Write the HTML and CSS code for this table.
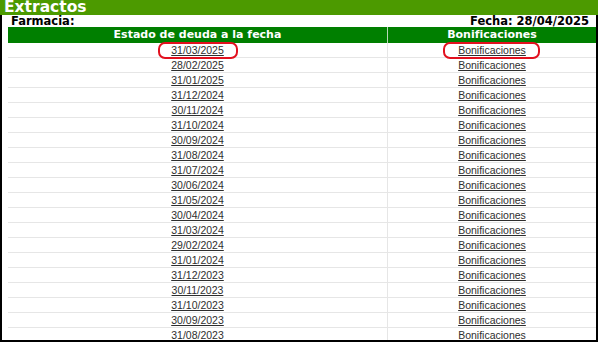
FILE: index.html
```html
<!DOCTYPE html>
<html lang="es">
<head>
<meta charset="utf-8">
<title>Extractos</title>
<link rel="stylesheet" href="styles.css">
</head>
<body>
<div class="page">
  <div class="titlebar">Extractos</div>
  <div class="panel">
    <div class="info">
      <span>Farmacia:</span>
      <span>Fecha: 28/04/2025</span>
    </div>
    <table class="grid">
      <colgroup><col class="c1"><col class="c2"></colgroup>
      <thead>
        <tr><th>Estado de deuda a la fecha</th><th class="sep">Bonificaciones</th></tr>
      </thead>
      <tbody>
        <tr><td><a href="#" class="mark">31/03/2025</a></td><td class="sep"><a href="#" class="mark mark-wide">Bonificaciones</a></td></tr>
        <tr><td><a href="#">28/02/2025</a></td><td class="sep"><a href="#">Bonificaciones</a></td></tr>
        <tr><td><a href="#">31/01/2025</a></td><td class="sep"><a href="#">Bonificaciones</a></td></tr>
        <tr><td><a href="#">31/12/2024</a></td><td class="sep"><a href="#">Bonificaciones</a></td></tr>
        <tr><td><a href="#">30/11/2024</a></td><td class="sep"><a href="#">Bonificaciones</a></td></tr>
        <tr><td><a href="#">31/10/2024</a></td><td class="sep"><a href="#">Bonificaciones</a></td></tr>
        <tr><td><a href="#">30/09/2024</a></td><td class="sep"><a href="#">Bonificaciones</a></td></tr>
        <tr><td><a href="#">31/08/2024</a></td><td class="sep"><a href="#">Bonificaciones</a></td></tr>
        <tr><td><a href="#">31/07/2024</a></td><td class="sep"><a href="#">Bonificaciones</a></td></tr>
        <tr><td><a href="#">30/06/2024</a></td><td class="sep"><a href="#">Bonificaciones</a></td></tr>
        <tr><td><a href="#">31/05/2024</a></td><td class="sep"><a href="#">Bonificaciones</a></td></tr>
        <tr><td><a href="#">30/04/2024</a></td><td class="sep"><a href="#">Bonificaciones</a></td></tr>
        <tr><td><a href="#">31/03/2024</a></td><td class="sep"><a href="#">Bonificaciones</a></td></tr>
        <tr><td><a href="#">29/02/2024</a></td><td class="sep"><a href="#">Bonificaciones</a></td></tr>
        <tr><td><a href="#">31/01/2024</a></td><td class="sep"><a href="#">Bonificaciones</a></td></tr>
        <tr><td><a href="#">31/12/2023</a></td><td class="sep"><a href="#">Bonificaciones</a></td></tr>
        <tr><td><a href="#">30/11/2023</a></td><td class="sep"><a href="#">Bonificaciones</a></td></tr>
        <tr><td><a href="#">31/10/2023</a></td><td class="sep"><a href="#">Bonificaciones</a></td></tr>
        <tr><td><a href="#">30/09/2023</a></td><td class="sep"><a href="#">Bonificaciones</a></td></tr>
        <tr><td><a href="#">31/08/2023</a></td><td class="sep"><a href="#">Bonificaciones</a></td></tr>
      </tbody>
    </table>
  </div>
</div>
</body>
</html>
```
FILE: styles.css
```css
html, body {
  margin: 0;
  padding: 0;
  background: #ffffff;
}

.page {
  width: 598px;
  height: 342px;
  display: flex;
  flex-direction: column;
  box-sizing: border-box;
  overflow: hidden;
}

.titlebar {
  height: 15px;
  line-height: 15px;
  padding-left: 4px;
  background: #4c9a00;
  color: #ffffff;
  font-family: "DejaVu Sans", Verdana, sans-serif;
  font-weight: bold;
  font-size: 15.5px;
  flex: none;
  overflow: hidden;
}

.panel {
  flex: 1;
  min-height: 0;
  border-left: 2px solid #000000;
  border-right: 2px solid #000000;
  border-bottom: 2px solid #000000;
  padding-left: 6px;
  overflow: hidden;
}

.info {
  height: 12px;
  line-height: 12px;
  display: flex;
  justify-content: space-between;
  padding-left: 3px;
  padding-right: 7px;
  font-family: "DejaVu Sans", Verdana, sans-serif;
  font-weight: bold;
  font-size: 11.5px;
  color: #000000;
}

.grid {
  width: 588px;
  border-collapse: separate;
  border-spacing: 0;
  table-layout: fixed;
}

.c1 { width: 379px; }
.c2 { width: 209px; }

.grid th {
  height: 16px;
  padding: 0;
  line-height: 16px;
  background: #007f00;
  color: #ffffff;
  font-family: "DejaVu Sans", Verdana, sans-serif;
  font-weight: bold;
  font-size: 11px;
  text-align: center;
}

.grid th.sep {
  border-left: 1px solid #b8d8b8;
}

.grid td {
  padding: 0;
  line-height: 14px;
  height: 14px;
  border-bottom: 1px solid #e6e6e6;
  text-align: center;
  font-family: "Liberation Sans", Arial, sans-serif;
  font-size: 10.5px;
}

.grid td.sep {
  border-left: 1px solid #e6e6e6;
}

.grid a {
  color: #2e2e2e;
  text-decoration: underline;
}

.mark {
  position: relative;
}

.mark::after {
  content: "";
  position: absolute;
  top: -2px;
  bottom: -3px;
  left: -13px;
  right: -14px;
  border: 2.5px solid #e2101e;
  border-radius: 7px;
}

.mark-wide::after {
  left: -15px;
  right: -14px;
}
```
